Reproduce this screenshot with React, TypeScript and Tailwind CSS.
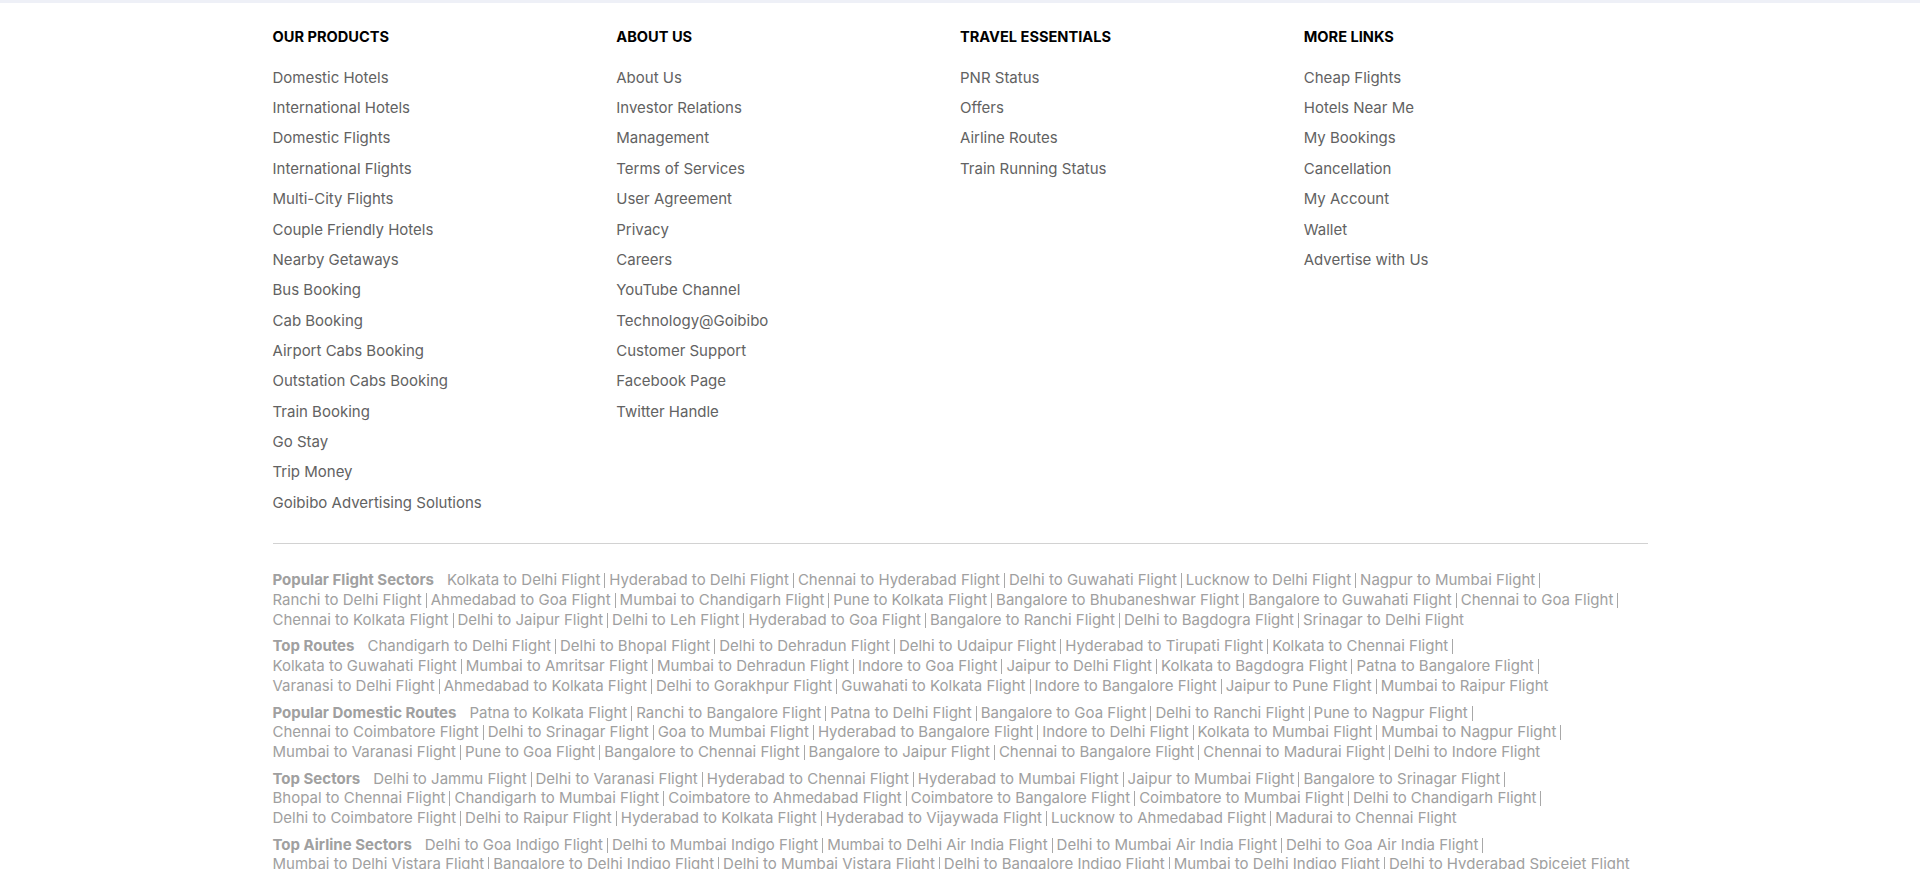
import React from 'react';

const columns: { title: string; links: string[] }[] = [
  {
    title: 'OUR PRODUCTS',
    links: [
      'Domestic Hotels',
      'International Hotels',
      'Domestic Flights',
      'International Flights',
      'Multi-City Flights',
      'Couple Friendly Hotels',
      'Nearby Getaways',
      'Bus Booking',
      'Cab Booking',
      'Airport Cabs Booking',
      'Outstation Cabs Booking',
      'Train Booking',
      'Go Stay',
      'Trip Money',
      'Goibibo Advertising Solutions',
    ],
  },
  {
    title: 'ABOUT US',
    links: [
      'About Us',
      'Investor Relations',
      'Management',
      'Terms of Services',
      'User Agreement',
      'Privacy',
      'Careers',
      'YouTube Channel',
      'Technology@Goibibo',
      'Customer Support',
      'Facebook Page',
      'Twitter Handle',
    ],
  },
  {
    title: 'TRAVEL ESSENTIALS',
    links: ['PNR Status', 'Offers', 'Airline Routes', 'Train Running Status'],
  },
  {
    title: 'MORE LINKS',
    links: [
      'Cheap Flights',
      'Hotels Near Me',
      'My Bookings',
      'Cancellation',
      'My Account',
      'Wallet',
      'Advertise with Us',
    ],
  },
];

// each section is split into the lines as they wrap on the live page
const sectors: { title: string; lines: string[][] }[] = [
  {
    title: 'Popular Flight Sectors',
    lines: [
      ['Kolkata to Delhi Flight', 'Hyderabad to Delhi Flight', 'Chennai to Hyderabad Flight', 'Delhi to Guwahati Flight', 'Lucknow to Delhi Flight', 'Nagpur to Mumbai Flight'],
      ['Ranchi to Delhi Flight', 'Ahmedabad to Goa Flight', 'Mumbai to Chandigarh Flight', 'Pune to Kolkata Flight', 'Bangalore to Bhubaneshwar Flight', 'Bangalore to Guwahati Flight', 'Chennai to Goa Flight'],
      ['Chennai to Kolkata Flight', 'Delhi to Jaipur Flight', 'Delhi to Leh Flight', 'Hyderabad to Goa Flight', 'Bangalore to Ranchi Flight', 'Delhi to Bagdogra Flight', 'Srinagar to Delhi Flight'],
    ],
  },
  {
    title: 'Top Routes',
    lines: [
      ['Chandigarh to Delhi Flight', 'Delhi to Bhopal Flight', 'Delhi to Dehradun Flight', 'Delhi to Udaipur Flight', 'Hyderabad to Tirupati Flight', 'Kolkata to Chennai Flight'],
      ['Kolkata to Guwahati Flight', 'Mumbai to Amritsar Flight', 'Mumbai to Dehradun Flight', 'Indore to Goa Flight', 'Jaipur to Delhi Flight', 'Kolkata to Bagdogra Flight', 'Patna to Bangalore Flight'],
      ['Varanasi to Delhi Flight', 'Ahmedabad to Kolkata Flight', 'Delhi to Gorakhpur Flight', 'Guwahati to Kolkata Flight', 'Indore to Bangalore Flight', 'Jaipur to Pune Flight', 'Mumbai to Raipur Flight'],
    ],
  },
  {
    title: 'Popular Domestic Routes',
    lines: [
      ['Patna to Kolkata Flight', 'Ranchi to Bangalore Flight', 'Patna to Delhi Flight', 'Bangalore to Goa Flight', 'Delhi to Ranchi Flight', 'Pune to Nagpur Flight'],
      ['Chennai to Coimbatore Flight', 'Delhi to Srinagar Flight', 'Goa to Mumbai Flight', 'Hyderabad to Bangalore Flight', 'Indore to Delhi Flight', 'Kolkata to Mumbai Flight', 'Mumbai to Nagpur Flight'],
      ['Mumbai to Varanasi Flight', 'Pune to Goa Flight', 'Bangalore to Chennai Flight', 'Bangalore to Jaipur Flight', 'Chennai to Bangalore Flight', 'Chennai to Madurai Flight', 'Delhi to Indore Flight'],
    ],
  },
  {
    title: 'Top Sectors',
    lines: [
      ['Delhi to Jammu Flight', 'Delhi to Varanasi Flight', 'Hyderabad to Chennai Flight', 'Hyderabad to Mumbai Flight', 'Jaipur to Mumbai Flight', 'Bangalore to Srinagar Flight'],
      ['Bhopal to Chennai Flight', 'Chandigarh to Mumbai Flight', 'Coimbatore to Ahmedabad Flight', 'Coimbatore to Bangalore Flight', 'Coimbatore to Mumbai Flight', 'Delhi to Chandigarh Flight'],
      ['Delhi to Coimbatore Flight', 'Delhi to Raipur Flight', 'Hyderabad to Kolkata Flight', 'Hyderabad to Vijaywada Flight', 'Lucknow to Ahmedabad Flight', 'Madurai to Chennai Flight'],
    ],
  },
  {
    title: 'Top Airline Sectors',
    lines: [
      ['Delhi to Goa Indigo Flight', 'Delhi to Mumbai Indigo Flight', 'Mumbai to Delhi Air India Flight', 'Delhi to Mumbai Air India Flight', 'Delhi to Goa Air India Flight'],
      ['Mumbai to Delhi Vistara Flight', 'Bangalore to Delhi Indigo Flight', 'Delhi to Mumbai Vistara Flight', 'Delhi to Bangalore Indigo Flight', 'Mumbai to Delhi Indigo Flight', 'Delhi to Hyderabad Spicejet Flight'],
    ],
  },
];

const SectorBlock: React.FC<{ title: string; lines: string[][] }> = ({ title, lines }) => {
  const lastLine = lines.length - 1;
  return (
    <div className="mb-[7.3px] text-[15px] leading-[19.6px] text-[#a0a0a0]">
      {lines.map((line, li) => (
        <div key={li} className="whitespace-nowrap">
          {li === 0 && <span className="mr-[13px] font-bold">{title}</span>}
          {line.map((item, i) => {
            const isLast = li === lastLine && i === line.length - 1;
            return (
              <React.Fragment key={item}>
                <a href="#" className="hover:underline">
                  {item}
                </a>
                {!isLast && (
                  <span className="mx-[4px] inline-block h-[15px] w-px bg-[#a8a8a8] align-[-3px]" />
                )}
              </React.Fragment>
            );
          })}
        </div>
      ))}
    </div>
  );
};

const App: React.FC = () => {
  return (
    <div className="min-h-screen bg-white" style={{ fontFamily: 'Inter, "Liberation Sans", sans-serif' }}>
      <div className="h-[3px] bg-[#eef0f7]" />
      <footer className="mx-auto w-[1375px] pt-6">
        <div className="grid grid-cols-4">
          {columns.map((col) => (
            <div key={col.title}>
              <h3 className="text-[14.6px] font-bold leading-[20px] text-black">{col.title}</h3>
              <ul className="mt-[15.8px]">
                {col.links.map((link) => (
                  <li key={link} className="text-[15px] leading-[30.35px] text-[#626262]">
                    <a href="#" className="hover:underline">
                      {link}
                    </a>
                  </li>
                ))}
              </ul>
            </div>
          ))}
        </div>
        <div className="mt-[25px] border-t border-[#d2d2d2] pt-[26.4px]">
          {sectors.map((s) => (
            <SectorBlock key={s.title} title={s.title} lines={s.lines} />
          ))}
        </div>
      </footer>
    </div>
  );
};

export default App;
